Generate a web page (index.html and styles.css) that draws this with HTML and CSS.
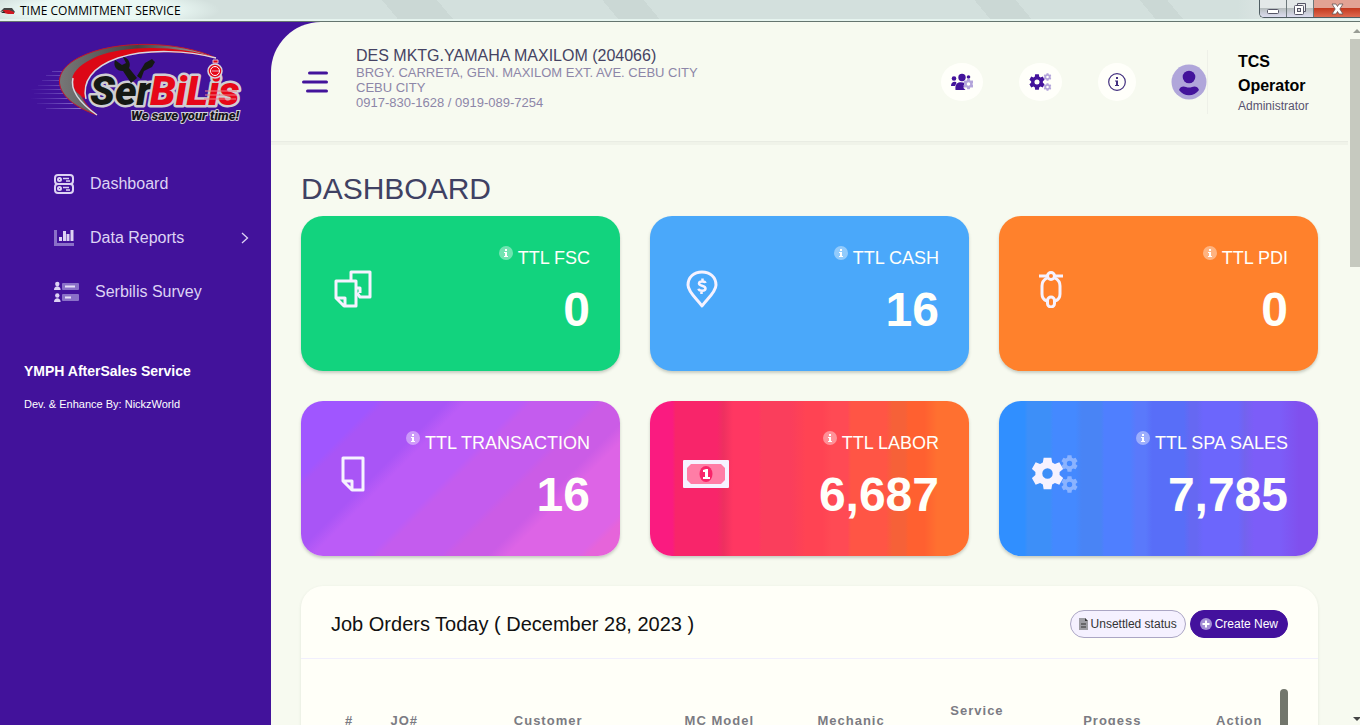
FILE: index.html
```html
<!DOCTYPE html>
<html lang="en">
<head>
<meta charset="utf-8">
<title>TIME COMMITMENT SERVICE</title>
<link rel="stylesheet" href="styles.css">
</head>
<body>
<svg width="0" height="0" class="defs" aria-hidden="true">
  <defs>
    <symbol id="gear" viewBox="0 0 24 24">
      <path fill-rule="evenodd" d="M9.200.5h5.600l.6 3.500 2 1.100 3.200-1.200 2.800 4.800-2.600 2.200v2.200l2.600 2.200-2.800 4.800-3.200-1.200-2 1.100-.6 3.500H9.200L8.600 20l-2-1.100-3.200 1.200L.6 15.300l2.600-2.200v-2.200L.6 8.700l2.800-4.800 3.200 1.200 2-1.100zM12 8.200a3.800 3.800 0 1 0 0 7.600 3.800 3.800 0 0 0 0-7.600z"/>
    </symbol>
    <symbol id="info" viewBox="0 0 14 14">
      <circle cx="7" cy="7" r="7" fill="#fff" opacity=".4"/>
      <path fill="#fff" d="M6 3h2v2H6zM5 6h3v4h1v1H5v-1h1V7H5z"/>
    </symbol>
    <symbol id="sheet" viewBox="0 0 24 36">
      <path d="M2 2h20v32H11L2 25zM2 25h9v9" fill="none" stroke="#f6f2ff" stroke-width="3" stroke-linejoin="round"/>
    </symbol>
  </defs>
</svg>

<div class="titlebar">
  <svg class="app-icon" width="15" height="8" viewBox="0 0 15 8"><path d="M0 5l4-4 8 0 3 4-1 1-6-3z" fill="#444"/><path d="M3 3h6l5 2v2H8l-4-1z" fill="#d01822"/><path d="M1 6l3-2 1 2z" fill="#222"/></svg>
  <span class="window-title">TIME COMMITMENT SERVICE</span>
  <div class="window-buttons">
    <button class="wbtn" aria-label="Minimize"><svg width="13" height="12" viewBox="0 0 13 12"><rect x=".5" y="6.500" width="11" height="4" rx="1" fill="#fff" stroke="#556"/></svg></button>
    <button class="wbtn" aria-label="Restore"><svg width="12" height="12" viewBox="0 0 12 12"><path d="M3.500 2.500v-2h8v8h-2" fill="#eee" stroke="#556"/><rect x=".5" y="2.500" width="9" height="9" rx="1" fill="#fff" stroke="#556"/><rect x="3.500" y="5.500" width="3" height="3" fill="#ddd" stroke="#556"/></svg></button>
    <button class="wbtn wbtn-close" aria-label="Close"><svg width="13" height="12" viewBox="0 0 13 12"><path d="M1 1h4l1.500 2.500L8 1h4L8.800 6 12 11H8L6.500 8.500 5 11H1l3.200-5z" fill="#fff" stroke="#655" stroke-width=".8"/></svg></button>
  </div>
</div>

<div class="app">
  <aside class="sidebar">
    <a class="brand" href="#" aria-label="SerBiLis">
      <svg width="220" height="90" viewBox="30 38 220 90">
        <defs>
          <linearGradient id="arcDark" x1="0" x2="1"><stop offset="0" stop-color="#777"/><stop offset=".5" stop-color="#444"/><stop offset="1" stop-color="#aaa"/></linearGradient>
          <linearGradient id="streak" x1="0" x2="1"><stop offset="0" stop-color="#7d66c8" stop-opacity="0"/><stop offset="1" stop-color="#9a86d8"/></linearGradient>
        </defs>
        <path d="M52 71h16v1H52zM46 75h22v1H46zM42 80h28v1H42zM38 85h34v1H38zM31 89h40v1H31zM34 93h38v1H34zM30 98h48v1H30zM37 103h45v1H37zM46 108h42v1H46z" fill="url(#streak)"/>
        <path d="M216 58C180 41 116 39 80 57 46 74 56 101 97 115 70 93 74 69 112 55c34-9 76-5 104 3z" fill="url(#arcDark)" stroke="#c3142a" stroke-width="1"/>
        <path d="M216 58C180 45 126 45 98 56 65 70 66 88 86 99c-4-17 6-32 32-41 31-9 71-6 98 0z" fill="#dc0716"/>
        <path d="M216 58c-27-7-67-10-98 0-26 9-36 24-32 41M97 115C80 103 70 90 73 78" fill="none" stroke="#d8d8e0" stroke-width="1.500"/>
        <g class="logo-word" stroke="#cfcfd2" stroke-width="5" stroke-linejoin="round" paint-order="stroke">
          <text x="90" y="105" font-size="41" fill="#151914">Ser</text>
          <text x="150" y="105" font-size="41" fill="#e70718">BiLis</text>
        </g>
        <path d="M115 60l7 5 4-2-3-6c6 1 8 7 6 11l8 10-6 5-8-12c-7 0-10-5-8-11zM137 76l5-8 3-5 7-4 3 3-3 5-8 4-3 8z" fill="#151914"/>
        <path d="M205 91h32M205 95h32M204 99h32" stroke="#ef7f86" stroke-width="1"/>
        <circle cx="215" cy="71" r="7" fill="#e70718" stroke="#d8d5df" stroke-width="1.500"/><circle cx="215" cy="71" r="4.500" fill="none" stroke="#fff"/><path d="M213 60h5v3h-5zM212 71h7" stroke="#e9b9c4" fill="#e70718"/>
        <text class="logo-tag" x="131" y="120" font-size="13" fill="#17151b" stroke="#d4d1dc" stroke-width="2" paint-order="stroke">We save your time!</text>
      </svg>
    </a>
    <nav class="nav">
      <a class="nav-item" href="#">
        <svg width="20" height="20" viewBox="0 0 20 20" fill="none" stroke="#ddd3f4" stroke-width="2"><rect x="1" y="1" width="18" height="9" rx="3"/><rect x="1" y="10" width="18" height="9" rx="3"/><circle cx="5.500" cy="5.500" r="1.500"/><circle cx="5.500" cy="14.500" r="1.500"/><path d="M9 4.500h6M12 7h4M9 13.500h6M12 16h4" stroke-width="1.500"/></svg>
        <span>Dashboard</span>
      </a>
      <a class="nav-item" href="#">
        <svg width="20" height="16" viewBox="0 0 20 16"><path d="M0 0h3v13h17v3H0z" fill="#8a70c8"/><path d="M5 7h3v4H5zM9 1h3v10H9zM12.500 4h3v7h-3zM16.500 0h3v11h-3z" fill="#ddd3f4"/></svg>
        <span>Data Reports</span>
        <svg class="chevron" width="8" height="12" viewBox="0 0 8 12"><path d="M1 1l5.500 5L1 11" fill="none" stroke="#ddd3f4" stroke-width="1.300"/></svg>
      </a>
      <a class="nav-item" href="#">
        <svg width="25" height="22" viewBox="0 0 25 22"><rect x="8" y="2" width="17" height="7" rx="1" fill="#8a70c8"/><rect x="8" y="13" width="17" height="7" rx="1" fill="#8a70c8"/><path d="M11 4.500h10v2H11zM11 15.500h6v2h-6z" fill="#e6dff7"/><g fill="#ddd3f4"><circle cx="3.300" cy="3" r="2.200"/><path d="M0 9c0-5 6.600-5 6.600 0z"/><circle cx="3.300" cy="14.500" r="2.200"/><path d="M0 21c0-5 6.600-5 6.600 0z"/></g></svg>
        <span>Serbilis Survey</span>
      </a>
    </nav>
    <div class="credits">
      <strong>YMPH AfterSales Service</strong>
      <p>Dev. &amp; Enhance By: NickzWorld</p>
    </div>
  </aside>

  <main class="main">
    <header class="header">
      <button class="menu-btn" aria-label="Toggle menu">
        <svg width="26" height="22" viewBox="0 0 26 22" stroke="#43139b" stroke-width="3" stroke-linecap="round"><path d="M7.500 2h17M1.500 11h23M5.500 20h19"/></svg>
      </button>
      <div class="branch">
        <div class="branch-name">DES MKTG.YAMAHA MAXILOM (204066)</div>
        <div class="branch-info">BRGY. CARRETA, GEN. MAXILOM EXT. AVE. CEBU CITY<br>CEBU CITY<br>0917-830-1628 / 0919-089-7254</div>
      </div>
      <div class="tools">
        <button class="tool" aria-label="User settings">
          <svg width="22" height="18" viewBox="0 0 22 18" fill="#43139b"><circle cx="3" cy="5.500" r="2.300"/><path d="M0 13c0-5 5-5 5.500-3L4 13z"/><circle cx="11" cy="4.500" r="3.700"/><path d="M4.500 17c-1-9 6-8 9-7l-1 5 2 2z"/><circle cx="17.500" cy="4" r="1.800"/><use href="#gear" x="12" y="5" width="11" height="12" fill="#b3a4da"/></svg>
        </button>
        <button class="tool" aria-label="Settings">
          <svg width="23" height="18" viewBox="0 0 23 18"><use href="#gear" x="0" y="1" width="16" height="16" fill="#43139b"/><use href="#gear" x="14" y="0" width="9" height="8" fill="#b3a4da"/><use href="#gear" x="14" y="10" width="9" height="8" fill="#b3a4da"/></svg>
        </button>
        <button class="tool" aria-label="Information">
          <svg width="18" height="18" viewBox="0 0 18 18"><circle cx="9" cy="9" r="8.300" fill="none" stroke="#43307f" stroke-width="1.200"/><path d="M8 4h2v2H8zM7 7.500h3V12h1v1H7v-1h1V8.500H7z" fill="#43307f"/></svg>
        </button>
      </div>
      <a class="profile" href="#">
        <svg width="36" height="36" viewBox="0 0 36 36"><circle cx="18" cy="18" r="17.500" fill="#b0a6da"/><circle cx="18" cy="13" r="6.300" fill="#43139b"/><path d="M8 26c1-4 5-4 7-3 2 .7 4 .7 6 0 2-1 6-1 7 3-5 7-15 7-20 0z" fill="#43139b"/></svg>
        <span class="profile-text"><b>TCS<br>Operator</b><small>Administrator</small></span>
      </a>
    </header>

    <section class="content">
      <h1>DASHBOARD</h1>
      <div class="cards">
        <article class="card fsc">
          <span class="card-icon"><svg width="38" height="38" viewBox="0 0 38 38" fill="none" stroke="#f6f2ff" stroke-width="3" stroke-linejoin="round"><path d="M17 11V2h19v25H26l-3-4M22 18h4v5"/><path d="M2 11h20v25H10l-8-8zM2 28h9v8"/></svg></span>
          <div class="card-body"><div class="label"><svg width="14" height="14"><use href="#info"/></svg>TTL FSC</div><div class="value">0</div></div>
        </article>
        <article class="card cash">
          <span class="card-icon"><svg width="32" height="38" viewBox="0 0 32 38" fill="none" stroke="#f6f2ff" stroke-width="3" stroke-linejoin="round"><path d="M16 36C11 29 2 22 2 15 2 7 8 2 16 2s14 5 14 13c0 7-9 14-14 21z"/><path d="M19.500 13c-.5-2-6.500-2.200-6.500.5 0 3 6.500 1.500 6.500 5 0 3-6.500 2.800-7 .3M16.500 8.500v3M15.500 20v4" stroke-width="2.500"/></svg></span>
          <div class="card-body"><div class="label"><svg width="14" height="14"><use href="#info"/></svg>TTL CASH</div><div class="value">16</div></div>
        </article>
        <article class="card pdi">
          <span class="card-icon"><svg width="26" height="38" viewBox="0 0 26 38" fill="none" stroke="#f6f2ff" stroke-width="3"><path d="M1 6h8M17 6h8"/><circle cx="13" cy="6" r="3.500"/><path d="M9 8c-4 2-5 4-5 8v8c0 4 2 6 5 7M17 8c4 2 5 4 5 8v8c0 4-2 6-5 7"/><rect x="9.500" y="27" width="7" height="10" rx="3.500"/></svg></span>
          <div class="card-body"><div class="label"><svg width="14" height="14"><use href="#info"/></svg>TTL PDI</div><div class="value">0</div></div>
        </article>
        <article class="card transaction">
          <span class="card-icon"><svg width="24" height="36"><use href="#sheet"/></svg></span>
          <div class="card-body"><div class="label"><svg width="14" height="14"><use href="#info"/></svg>TTL TRANSACTION</div><div class="value">16</div></div>
        </article>
        <article class="card labor">
          <span class="card-icon"><svg width="46" height="28" viewBox="0 0 46 28"><rect width="46" height="28" rx="1" fill="#f6f2ff"/><path d="M8 4h30l4 4v12l-4 4H8l-4-4V8z" fill="#ff7da6"/><ellipse cx="23" cy="14" rx="6.500" ry="8" fill="#f8256a"/><path d="M20 10l3-1h2v8h2v2h-7v-2h2v-5h-2z" fill="#fff"/></svg></span>
          <div class="card-body"><div class="label"><svg width="14" height="14"><use href="#info"/></svg>TTL LABOR</div><div class="value">6,687</div></div>
        </article>
        <article class="card spa">
          <span class="card-icon"><svg width="46" height="38" viewBox="0 0 46 38" fill="#f6f2ff"><use href="#gear" x="-1" y="2" width="33" height="33"/><g opacity=".4"><use href="#gear" x="29" y="0" width="17" height="17"/><use href="#gear" x="29" y="21" width="17" height="17"/></g></svg></span>
          <div class="card-body"><div class="label"><svg width="14" height="14"><use href="#info"/></svg>TTL SPA SALES</div><div class="value">7,785</div></div>
        </article>
      </div>

      <section class="panel">
        <div class="panel-head">
          <h2>Job Orders Today ( December 28, 2023 )</h2>
          <div class="actions">
            <button class="btn btn-light"><svg width="9" height="12" viewBox="0 0 9 12"><path d="M0 0h6l3 3v9H0z" fill="#9d9da3"/><path d="M6 0l3 3H6zM2 5.500h5v1H2zM2 8.500h5v1H2z" fill="#333"/></svg>Unsettled status</button>
            <button class="btn btn-primary"><svg width="12" height="12" viewBox="0 0 12 12"><circle cx="6" cy="6" r="6" fill="#a48fd5"/><path d="M5 2.500h2V5h2.500v2H7v2.500H5V7H2.500V5H5z" fill="#fff"/></svg>Create New</button>
          </div>
        </div>
        <div class="table-wrap">
          <table>
            <colgroup><col class="c-num"><col class="c-jo"><col class="c-customer"><col class="c-model"><col class="c-mechanic"><col class="c-service"><col class="c-progress"><col class="c-action"></colgroup>
            <thead><tr><th>#</th><th>JO#</th><th>Customer</th><th>MC Model</th><th>Mechanic</th><th>Service<br>&nbsp;</th><th>Progess</th><th>Action</th></tr></thead>
          </table>
          <div class="table-scroll"></div>
        </div>
      </section>
    </section>
  </main>

  <div class="scrollbar" aria-hidden="true"><span class="arrow-up"></span><span class="thumb"></span><span class="arrow-down"></span></div>
</div>
</body>
</html>
```
FILE: styles.css
```css
* { box-sizing: border-box; }

body {
  margin: 0;
  height: 100vh;
  display: flex;
  flex-direction: column;
  overflow: hidden;
  background: #f7faf0;
  font-family: "Liberation Sans", Arial, sans-serif;
  color: #3f4163;
}

a { color: inherit; text-decoration: none; }
button { font: inherit; border: 0; padding: 0; cursor: pointer; }
svg { display: block; flex: none; }
h1, h2, p { margin: 0; font-weight: 400; }
.defs { position: absolute; }

/* Window frame */
.titlebar {
  flex: none;
  height: 22px;
  display: flex;
  align-items: center;
  gap: 5px;
  border-bottom: 1px solid #65756f;
  background:
    radial-gradient(ellipse 120px 20px at 100px 10px, #eaf8f4 60%, transparent),
    linear-gradient(50deg, transparent 29%, #cbd8d5 29% 33%, transparent 33% 45%, #cbd8d5 45% 48%, transparent 48% 72%, #cbd8d5 72% 75%, transparent 75% 84%, #cbd8d5 84% 86%, transparent 86%),
    linear-gradient(90deg, #d3e0dd 0 91%, #e2e8e8 95%, #dcebe6);
  box-shadow: inset 0 -2px #e6f4ef;
}
.window-title {
  flex: 1;
  font: 12px/20px "Open Sans", "Noto Sans", sans-serif;
  color: #000;
}
.window-buttons {
  align-self: flex-start;
  display: flex;
  height: 18px;
  border: solid #4f5d62;
  border-width: 0 0 1px 1px;
  border-radius: 0 0 0 5px;
  overflow: hidden;
}
.wbtn {
  width: 27px;
  display: flex;
  align-items: center;
  justify-content: center;
  border-right: 1px solid #6c787b;
  background: linear-gradient(#e3e8e8 50%, #b7bebf 50%, #dcdcf0);
}
.wbtn-close {
  width: 46px;
  border: 0;
  background: linear-gradient(#e2a294 45%, #c43a20 50%, #df6a50);
}

/* Shell */
.app {
  flex: 1;
  min-height: 0;
  display: flex;
  background: linear-gradient(90deg, #42129b 400px, #f7faf0 400px);
}
.sidebar { flex: none; width: 271px; color: #ddd3f4; }
.brand { display: flex; height: 135px; padding: 16px 30px; }
.logo-word, .logo-tag { font-family: Roboto, sans-serif; font-weight: 900; font-style: italic; }
.nav-item {
  display: flex;
  align-items: center;
  gap: 16px;
  height: 54px;
  padding: 0 22px 0 54px;
  font-size: 16px;
}
.chevron { margin-left: auto; }
.credits {
  display: grid;
  gap: 15px;
  padding: 42px 24px;
  color: #fff;
  font-size: 11px;
  line-height: 16px;
}
.credits strong { font-size: 14px; line-height: 20px; }

.main {
  flex: 1;
  min-width: 0;
  overflow: hidden;
  background: #f7faf0;
  border-top-left-radius: 50px;
}

/* Header */
.header {
  height: 120px;
  display: flex;
  align-items: center;
  padding: 0 38px 0 31px;
  border-bottom: 1px solid #e9ece3;
  box-shadow: 0 3px 0 #f0f3e9;
}
.menu-btn { background: none; }
.branch { margin: 0 auto 6px 28px; }
.branch-name { font-size: 16px; line-height: 18px; color: #454363; }
.branch-info { font-size: 13px; line-height: 15px; color: #8d86a8; }
.tools { display: flex; gap: 36px; }
.tool { padding: 10px; border-radius: 50%; background: #fffffa; }
.profile { display: flex; align-items: center; margin-left: 35px; color: #000; }
.profile-text {
  display: grid;
  width: 103px;
  padding-left: 30px;
  border-left: 1px solid #eef0e8;
}
.profile-text b { font-size: 16px; line-height: 24px; }
.profile-text small { font-size: 12px; line-height: 16px; color: #57526f; }

/* Summary cards */
.content { padding: 30px; }
h1 { margin-bottom: 10px; font-size: 30px; line-height: 34px; }
.cards { display: grid; grid-template-columns: repeat(3, 1fr); gap: 30px; }
.card {
  display: flex;
  align-items: center;
  justify-content: space-between;
  height: 155px;
  padding: 0 30px;
  border-radius: 22px;
  color: #fffffa;
  box-shadow: 0 2px 3px rgba(60, 70, 60, .25);
}
.card-icon { display: flex; justify-content: center; min-width: 44px; margin-bottom: 10px; }
.labor .card-icon, .spa .card-icon { margin-left: 3px; }
.card-body { text-align: right; }
.label { display: flex; justify-content: flex-end; gap: 5px; font-size: 18px; line-height: 24px; }
.value { font-size: 48px; font-weight: 700; line-height: 58px; margin: 11px 0 3px; }
.fsc { background: #12d37e; }
.cash { background: #4aa8fa; }
.pdi { background: #ff812c; }
.transaction { background: linear-gradient(135deg, #a056ff 16%, #a955f6 18% 31%, #bb5cf7 35% 47%, #c45cee 49% 62%, #cb5ce6 64% 72%, #dd64e6 76% 91%, #e664da 93%); }
.labor { background: linear-gradient(90deg, #fa1b80 7%, #f8256a 8% 21%, #ee3060 23%, #ff3762 26% 34%, #fa3e5c 35% 44%, #ff4353 49% 54%, #ff4a54 57% 62%, #ff5545 63% 74%, #f66138 76% 80%, #ff6030 81% 86%, #ff7030 90%); }
.spa { background: linear-gradient(90deg, #308fff 8%, #3d8ff8 9% 16%, #4489ff 17% 24%, #4984f5 26% 32%, #4f7fff 33% 41%, #5a79fb 43% 46%, #586ef8 48% 58%, #6668f2 60% 62%, #6c66fc 64% 75%, #7363ee 77%, #7c5df8 80% 88%, #8050ee 94%); }

/* Job orders */
.panel {
  margin-top: 30px;
  border-radius: 22px;
  background: #fffff8;
  box-shadow: 0 1px 3px rgba(60, 70, 60, .12);
}
.panel-head {
  display: flex;
  align-items: center;
  justify-content: space-between;
  height: 73px;
  padding: 4px 30px 0;
  border-bottom: 1px solid #f1effd;
}
h2 { font-size: 20px; line-height: 24px; color: #111; }
.actions { display: flex; gap: 4px; }
.btn {
  display: flex;
  align-items: center;
  gap: 3px;
  height: 28px;
  padding: 0 9px;
  border: 1px solid #aba6c4;
  border-radius: 14px;
  font-size: 12px;
}
.btn-light { padding: 0 8px; background: #f5f1ff; color: #333; }
.btn-primary { background: #43119d; border-color: #43119d; color: #fff; }
.table-wrap { display: flex; height: 300px; margin: 30px; }
table { flex: 1; width: 100%; align-self: flex-start; table-layout: fixed; border-collapse: collapse; }
th {
  padding: 12px 0 12px 12px;
  text-align: left;
  white-space: nowrap;
  font-size: 13px;
  line-height: 20px;
  letter-spacing: 1px;
  color: #7b7b83;
}
th:first-child { padding-left: 14px; }
.c-num { width: 5%; }
.c-jo { width: 13%; }
.c-customer { width: 18%; }
.c-model { width: 14%; }
.c-mechanic { width: 14%; }
.c-service { width: 14%; }
.c-progress { width: 14%; }
.c-action { width: 8%; }
.table-scroll { width: 8px; border-radius: 4px; background: #72766c; }

/* Page scrollbar */
.scrollbar {
  flex: none;
  width: 12px;
  display: flex;
  flex-direction: column;
  padding: 7px 0 4px 2px;
}
.arrow-up, .arrow-down { margin-left: 3px; width: 8px; border: 4px solid transparent; }
.arrow-up { border-bottom-color: #999d95; border-top: 0; }
.thumb { height: 33%; margin-top: 6px; background: #c6c9bf; }
.arrow-down { margin-top: auto; border-top-color: #444; border-bottom: 0; }
```
